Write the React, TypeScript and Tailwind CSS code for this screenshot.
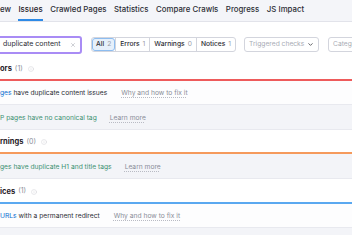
import { ChevronDown, Info, X } from 'lucide-react'

const tabs = ['ew', 'Issues', 'Crawled Pages', 'Statistics', 'Compare Crawls', 'Progress', 'JS Impact']

const segments = [
  { label: 'All', count: 2, active: true },
  { label: 'Errors', count: 1 },
  { label: 'Warnings', count: 0 },
  { label: 'Notices', count: 1 },
]

function SectionHeader({ title, count, line, tall }: { title: string; count: number; line: string; tall?: boolean }) {
  return (
    <div className={`flex items-center gap-[3px] border-b-2 bg-white pt-[2px] ${tall ? 'h-[25px]' : 'h-[24px]'} ${line}`}>
      <span className="text-[7.5px] font-bold text-[#1f2027]">{title}</span>
      <span className="text-[7px] text-[#8b8e99]">({count})</span>
      <Info className="ml-[2px] h-[6px] w-[6px] text-[#c3c5cd]" strokeWidth={1.5} />
    </div>
  )
}

function Hint({ children }: { children: React.ReactNode }) {
  return (
    <span className="whitespace-nowrap text-[6.7px] text-[#8a8d98] underline decoration-dotted decoration-[#b9bbc4] underline-offset-2">
      {children}
    </span>
  )
}

export default function App() {
  return (
    <div className="h-[235px] w-[352px] overflow-hidden bg-[#f3f4f8] font-['Inter',sans-serif] text-[#2c2d35]">
      {/* Tabs */}
      <nav className="flex h-[22px] gap-[7.5px] whitespace-nowrap border-b border-[#e2e3ea] bg-[#f4f5f9] text-[7.85px] font-medium">
        {tabs.map((t) => (
          <div
            key={t}
            className={`flex items-center border-b-2 pt-[1px] ${t === 'Issues' ? 'border-[#2d8ae6] text-[#1f2027]' : 'border-transparent text-[#2c2d35]'}`}
          >
            {t}
          </div>
        ))}
      </nav>

      {/* Filters */}
      <div className="flex h-[35px] items-center whitespace-nowrap bg-white pt-[10px]">
        <div className="-ml-[8px] flex h-[18px] w-[90px] shrink-0 items-center justify-between rounded-[3px] border-2 border-[#a98cf5] pl-[9px] pr-[4px] text-[7px] text-[#2c2d35]">
          <span>duplicate content</span>
          <X className="h-[6px] w-[6px] text-[#9da0aa]" strokeWidth={2} />
        </div>
        <div className="ml-[9px] flex h-[15px] shrink-0 overflow-hidden rounded-[3px] border border-[#d3d5dd] text-[6.7px]">
          {segments.map((s, i) => (
            <div
              key={s.label}
              className={`flex items-center gap-[3px] px-[4px] ${i > 0 ? 'border-l border-[#d3d5dd]' : ''} ${s.active ? 'rounded-[3px] bg-[#e6f0fb] outline outline-1 -outline-offset-1 outline-[#8dbdf0]' : ''}`}
            >
              <span className="font-medium text-[#2c2d35]">{s.label}</span>
              <span className="text-[#9a9da7]">{s.count}</span>
            </div>
          ))}
        </div>
        <div className="ml-[8px] flex h-[15px] w-[75px] shrink-0 items-center justify-between rounded-[3px] border border-[#d3d5dd] px-[4px] text-[6.7px] text-[#a9acb5]">
          <span>Triggered checks</span>
          <ChevronDown className="h-[7px] w-[7px] text-[#2c2d35]" strokeWidth={2.5} />
        </div>
        <div className="ml-[9px] flex h-[15px] w-[40px] shrink-0 items-center rounded-[3px] border border-[#d3d5dd] px-[4px] text-[6.7px] text-[#a9acb5]">
          <span>Catego</span>
        </div>
      </div>

      {/* Errors */}
      <SectionHeader title="ors" count={1} line="border-[#ee5b5b]" />
      <div className="flex h-[24px] items-center gap-[14px] whitespace-nowrap border-b border-[#e8e9ef] bg-[#fdfdfe] pt-[2px] text-[6.7px]">
        <span>
          <span className="text-[#0a6fd0]">ges</span> have duplicate content issues
        </span>
        <Hint>Why and how to fix it</Hint>
      </div>
      <div className="flex h-[25px] items-center gap-[13px] whitespace-nowrap border-b border-[#e8e9ef] bg-[#f3f4f8] pt-[2px] text-[6.7px]">
        <span className="text-[#3d9272]">P pages have no canonical tag</span>
        <Hint>Learn more</Hint>
      </div>

      {/* Warnings */}
      <SectionHeader title="rnings" count={0} line="border-[#f59a5c]" />
      <div className="flex h-[25px] items-center gap-[13px] whitespace-nowrap border-b border-[#e8e9ef] bg-[#f3f4f8] pt-[2px] text-[6.7px]">
        <span className="text-[#3d9272]">ges have duplicate H1 and title tags</span>
        <Hint>Learn more</Hint>
      </div>

      {/* Notices */}
      <SectionHeader title="ices" count={1} line="border-[#5aa8f0]" tall />
      <div className="flex h-[24px] items-center gap-[14px] whitespace-nowrap border-b border-[#e8e9ef] bg-[#fdfdfe] pt-[2px] text-[6.7px]">
        <span>
          <span className="text-[#0a6fd0]">URLs</span> with a permanent redirect
        </span>
        <Hint>Why and how to fix it</Hint>
      </div>
    </div>
  )
}
